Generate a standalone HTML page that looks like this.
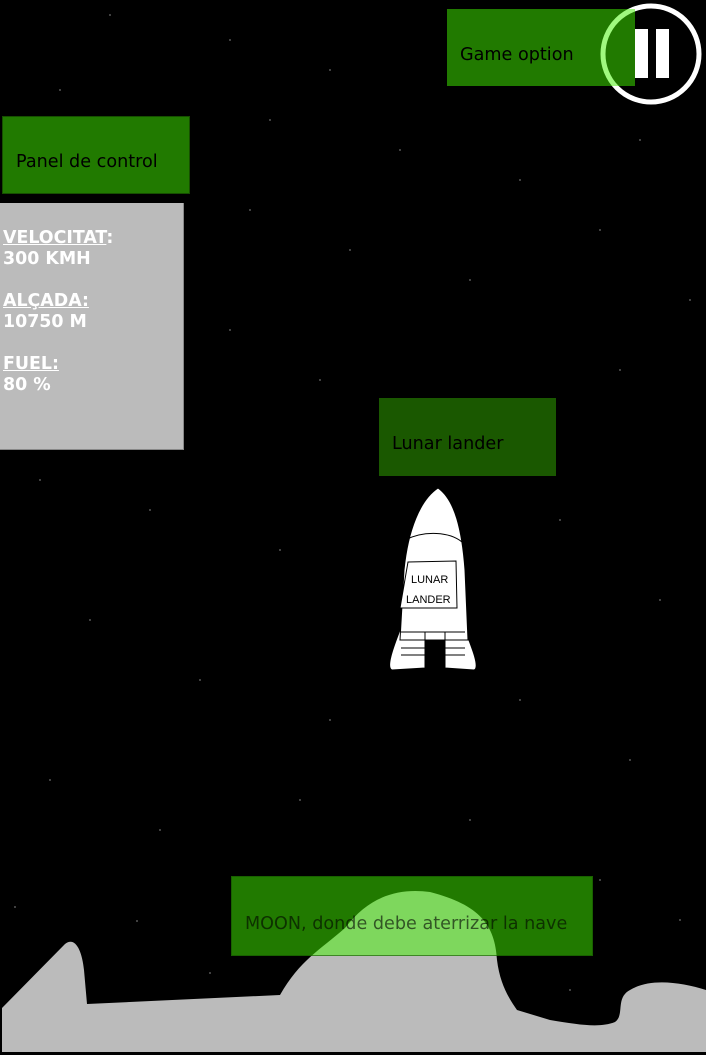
<!DOCTYPE html>
<html><head><meta charset="utf-8"><style>
html,body{margin:0;padding:0;background:#000;width:706px;height:1055px;overflow:hidden;position:relative;font-family:"DejaVu Sans","Liberation Sans",sans-serif}
.box{position:absolute;color:#000;font-size:17.6px;box-sizing:border-box;white-space:nowrap}
.panel{position:absolute;left:0;top:203px;width:184px;height:247px;background:#bbb;border-right:1px solid #888;border-bottom:1px solid #888;color:#fff;font-weight:bold;font-size:17.4px;line-height:21px;padding:25px 0 0 3px;box-sizing:border-box}
.panel u{text-decoration:underline}
</style></head><body>
<svg width="706" height="1055" style="position:absolute;left:0;top:0">
<g fill="#555">
<circle cx="110" cy="15" r="1"/><circle cx="230" cy="40" r="1"/><circle cx="330" cy="70" r="1"/><circle cx="60" cy="90" r="1"/><circle cx="270" cy="120" r="1"/><circle cx="400" cy="150" r="1"/><circle cx="520" cy="180" r="1"/><circle cx="640" cy="140" r="1"/><circle cx="250" cy="210" r="1"/><circle cx="350" cy="250" r="1"/><circle cx="470" cy="280" r="1"/><circle cx="600" cy="230" r="1"/><circle cx="690" cy="300" r="1"/><circle cx="230" cy="330" r="1"/><circle cx="320" cy="380" r="1"/><circle cx="620" cy="370" r="1"/><circle cx="40" cy="480" r="1"/><circle cx="150" cy="510" r="1"/><circle cx="280" cy="550" r="1"/><circle cx="560" cy="520" r="1"/><circle cx="660" cy="600" r="1"/><circle cx="90" cy="620" r="1"/><circle cx="200" cy="680" r="1"/><circle cx="330" cy="720" r="1"/><circle cx="520" cy="700" r="1"/><circle cx="630" cy="760" r="1"/><circle cx="50" cy="780" r="1"/><circle cx="160" cy="830" r="1"/><circle cx="300" cy="800" r="1"/><circle cx="470" cy="820" r="1"/><circle cx="600" cy="880" r="1"/><circle cx="680" cy="920" r="1"/><circle cx="15" cy="907" r="1"/><circle cx="137" cy="921" r="1"/><circle cx="210" cy="973" r="1"/><circle cx="570" cy="990" r="1"/>
</g>
<path d="M2,1008 L65,944 C75,936 82,950 84,970 L87,1004 L280,995 C300,960 320,950 345,928 C370,895 400,888 430,892 C480,905 495,925 497,960 C500,985 510,1000 517,1010 L550,1020 C580,1025 600,1028 615,1022 C625,1015 615,998 630,990 C650,978 680,982 706,990 L706,1052 L2,1052 Z" fill="#bbb"/>
<circle cx="651" cy="54" r="48" fill="none" stroke="#fff" stroke-width="5"/>
<rect x="635" y="29" width="13" height="49" fill="#fff"/>
<rect x="656" y="29" width="13" height="49" fill="#fff"/>
<g stroke="#000" stroke-width="1" fill="#fff">
<path d="M402,625 C392,650 386,668 392,670 L425,668 L425,640 Z"/>
<path d="M463,625 C473,650 480,668 474,670 L445,668 L445,640 Z"/>
<path d="M438,488 C420,500 408,530 404,570 L400,640 L468,640 L465,570 C462,530 455,500 438,488 Z"/>
<path d="M405,540 C425,530 450,532 462,542" fill="none"/>
<path d="M408,562 L456,561 L457,608 L400,608 Z" fill="#fff"/>
<path d="M401,632 L465,632 M401,640 L465,640 M401,648 L465,648 M401,655 L465,655 M425,632 L425,655 M445,632 L445,655" fill="none"/>
</g>
<text x="411" y="583" font-size="11" font-family="Liberation Sans" fill="#000">LUNAR</text>
<text x="406" y="603" font-size="11" font-family="Liberation Sans" fill="#000">LANDER</text>
</svg>
<div class="box" style="left:447px;top:9px;width:188px;height:77px;background:rgba(66,244,0,0.5);padding:36px 0 0 13px">Game option</div>
<div class="box" style="left:2px;top:116px;width:188px;height:78px;background:#217a00;border:1px solid #164f00;padding:35px 0 0 13px">Panel de control</div>
<div class="panel"><u>VELOCITAT</u>:<br>300 KMH<br><br><u>ALÇADA:</u><br>10750 M<br><br><u>FUEL:</u><br>80 %</div>
<div class="box" style="left:379px;top:398px;width:177px;height:78px;background:#1a5800;padding:36px 0 0 13px">Lunar lander</div>
<div class="box" style="left:231px;top:876px;width:362px;height:80px;background:rgba(66,244,0,0.5);border:1px solid rgba(20,80,0,0.6);padding:37px 0 0 13px;color:rgba(0,0,0,0.6)">MOON, donde debe aterrizar la nave</div>
</body></html>
